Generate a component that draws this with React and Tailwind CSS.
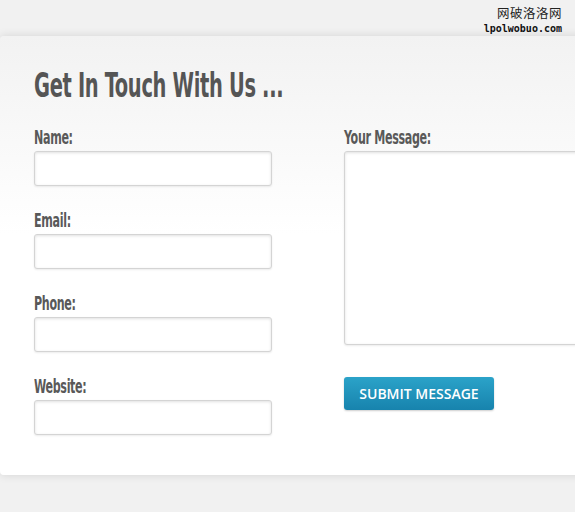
import React from "react";

const condensed = {
  fontFamily: "'DejaVu Sans Condensed', 'DejaVu Sans', sans-serif",
};

function Label({ children }) {
  return (
    <div className="h-[24px] mb-[4px] flex items-end">
      <span
        className="inline-block origin-left scale-x-[0.65] text-[19px] leading-none font-bold text-[#595959] tracking-[-0.5px] whitespace-nowrap"
        style={condensed}
      >
        {children}
      </span>
    </div>
  );
}

function Field({ label }) {
  return (
    <div className="flex flex-col">
      <Label>{label}</Label>
      <input
        type="text"
        className="w-[238px] h-[35px] bg-white border border-[#d4d4d4] rounded-[3px] shadow-[inset_0_1px_3px_rgba(0,0,0,0.12),0_1px_2px_rgba(0,0,0,0.08)] outline-none"
      />
    </div>
  );
}

export default function App() {
  return (
    <div className="w-[575px] h-[512px] bg-[#f1f1f1] overflow-hidden flex flex-col">
      <div className="h-[36px] shrink-0 flex justify-end pr-[13px] pt-[7px]">
        <div className="flex flex-col items-end leading-none">
          <span className="text-[12.5px] text-[#222] tracking-[0.5px]" style={{ fontFamily: "'Noto Sans CJK SC', sans-serif" }}>
            网破洛洛网
          </span>
          <span className="text-[10px] font-bold text-[#111] mt-[4px]" style={{ fontFamily: "'DejaVu Sans Mono', monospace" }}>
            lpolwobuo.com
          </span>
        </div>
      </div>
      <div className="h-[439px] shrink-0 w-[600px] rounded-l-[4px] bg-gradient-to-b from-[#f2f2f2] via-[#ffffff] via-45% to-white shadow-[0_0_10px_rgba(0,0,0,0.12)] pl-[34px] pt-[36px]">
        <h1 className="h-[30px] flex items-end">
          <span
            className="inline-block origin-left scale-x-[0.655] text-[33px] leading-none font-bold text-[#555] tracking-[-0.5px] whitespace-nowrap"
            style={condensed}
          >
            Get In Touch With Us ...
          </span>
        </h1>
        <div className="flex mt-[21px]">
          <div className="w-[310px] shrink-0 flex flex-col gap-[20px]">
            <Field label="Name:" />
            <Field label="Email:" />
            <Field label="Phone:" />
            <Field label="Website:" />
          </div>
          <div className="flex flex-col">
            <Label>Your Message:</Label>
            <textarea className="w-[256px] h-[194px] bg-white border border-[#d4d4d4] rounded-[3px] shadow-[inset_0_1px_3px_rgba(0,0,0,0.12),0_1px_2px_rgba(0,0,0,0.08)] outline-none resize-none" />
            <button
              className="mt-[32px] w-[150px] h-[33px] rounded-[3px] bg-gradient-to-b from-[#2ba3c9] to-[#1783ad] text-white text-[14px] font-semibold shadow-[0_1px_2px_rgba(0,0,0,0.2)]"
              style={{ fontFamily: "'Open Sans', sans-serif" }}
            >
              SUBMIT MESSAGE
            </button>
          </div>
        </div>
      </div>
    </div>
  );
}
